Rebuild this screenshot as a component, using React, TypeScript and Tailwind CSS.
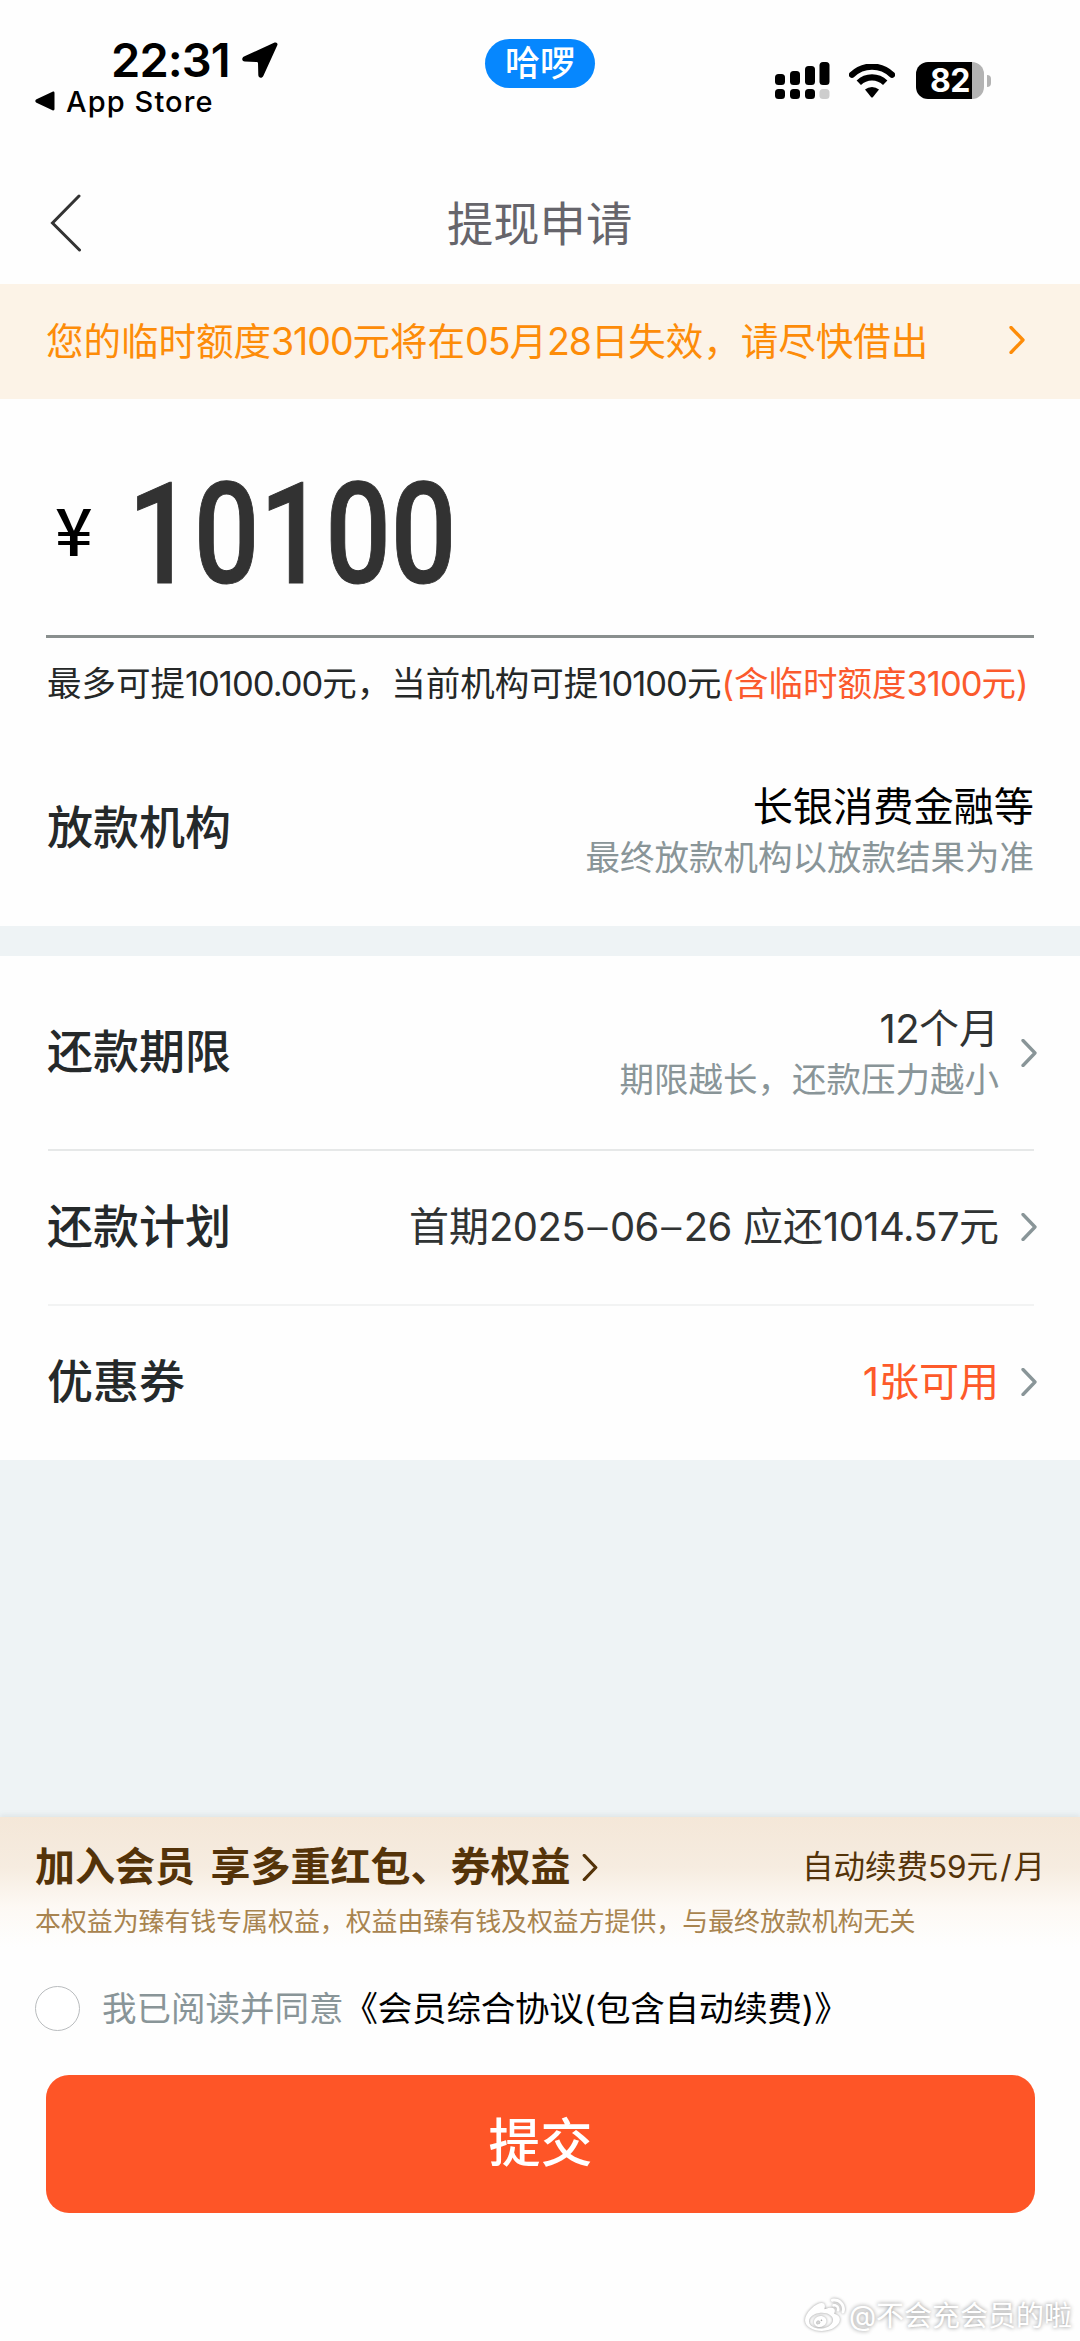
import type { ReactNode } from "react";
import { FaWeibo } from "react-icons/fa";

function Chevron({ className }: { className: string }) {
  return (
    <svg viewBox="0 0 16 28" fill="none" stroke="currentColor" className={className}>
      <path d="M2 1.5 14 14 2 26.5" strokeWidth="3.300" strokeLinecap="round" strokeLinejoin="round" />
    </svg>
  );
}

/* Digits set slightly tighter than the surrounding Chinese text. */
function Num({ children }: { children: ReactNode }) {
  return <span className="tracking-[-0.028em]">{children}</span>;
}

function LargeNum({ children }: { children: ReactNode }) {
  return <span className="tracking-[-0.015em]">{children}</span>;
}

function Dash() {
  return <span className="inline-block w-[25px] text-center font-light">–</span>;
}

function StatusBar() {
  return (
    <header className="flex h-[130px] shrink-0 text-black">
      <div className="w-[485px] pt-[36px]">
        <div className="flex h-[46px] items-center pl-[111px]">
          <span className="w-[131px] text-[47px] leading-none font-semibold tracking-[-0.9px]">22:31</span>
          <svg viewBox="0 0 36 36" className="mt-[2px] h-9 w-9">
            <path d="M32.6.6 2 14.6C-.6 16-.3 19.400 2.800 19.600L14.700 20a1.300 1.300 0 0 1 1.300 1.300l.3 11.600c.1 3.200 3.700 3.700 5 1L35.300 3.300C36.100 1.300 34.500-.2 32.600.6Z" fill="currentColor" />
          </svg>
        </div>
        <div className="mt-[1px] flex h-9 items-center pl-[35px]">
          <svg viewBox="0 0 20 20" className="h-5 w-5">
            <path d="M17.500.8 1.500 8.300c-1.600.8-1.600 2.600 0 3.400l16 7.500c1 .5 2 0 2-1.200V2c0-1.200-1-1.700-2-1.200Z" fill="currentColor" />
          </svg>
          <span className="ml-[11px] text-[29px] leading-none font-medium tracking-[1.1px]">App Store</span>
        </div>
      </div>
      <div className="mt-[39px] flex h-[49px] w-[110px] items-center justify-center rounded-full bg-[#0687fe] text-[35px] leading-none font-medium text-white">
        哈啰
      </div>
      <div className="ml-[180px] flex h-[37px] items-start pt-[62px]">
        <svg viewBox="0 0 55 38" className="h-[38px] w-[55px]" fill="currentColor">
          <rect x="0" y="12" width="10" height="11" rx="3.500" />
          <rect x="15" y="9" width="10" height="14" rx="3.500" />
          <rect x="30" y="4" width="10" height="19" rx="3.500" />
          <rect x="44.500" y="0" width="10" height="23" rx="3.500" />
          <rect x="0" y="27" width="10" height="10" rx="3.500" />
          <rect x="15" y="27" width="10" height="10" rx="3.500" />
          <rect x="30" y="27" width="10" height="10" rx="3.500" />
          <rect x="44.500" y="27" width="10" height="10" rx="3.500" fill="#cdcdcd" />
        </svg>
        <svg viewBox="0 0 46 34" className="mt-[2px] ml-[19px] h-[34px] w-[46px]">
          <g fill="none" stroke="currentColor" strokeWidth="6.200">
            <path d="M3 10.800a28.500 28.500 0 0 1 40 0" strokeLinecap="round" />
            <path d="M9.800 18.800a18.800 18.800 0 0 1 26.400 0" />
          </g>
          <path d="M16 25.600a10.500 10.500 0 0 1 14 0l-6 7.400a1.300 1.300 0 0 1-2 0Z" fill="currentColor" />
        </svg>
        <div className="ml-[21px] flex items-center">
          <div className="flex h-[37px] w-[68px] items-center justify-center overflow-hidden rounded-[12px] bg-[linear-gradient(90deg,#000_56px,#b3b3b3_56px)]">
            <span className="text-[32px] leading-none font-bold tracking-[-0.5px] text-white">82</span>
          </div>
          <div className="ml-[3px] h-3 w-1 rounded-r-full bg-[#b3b3b3]" />
        </div>
      </div>
    </header>
  );
}

function Row({ label, height, children }: { label: string; height: string; children: ReactNode }) {
  return (
    <div className={"mr-[46px] ml-[47px] flex shrink-0 items-center justify-between " + height}>
      <span className="mb-[3px] text-[46px] leading-none font-medium text-[#25292a]">{label}</span>
      {children}
    </div>
  );
}

export default function App() {
  return (
    <div
      lang="zh-CN"
      className="flex h-[2341px] w-[1080px] flex-col overflow-hidden bg-[#eef3f5] font-['Inter','Noto_Sans_CJK_SC',sans-serif] whitespace-nowrap"
    >
      <div className="flex h-[926px] shrink-0 flex-col bg-[#fefefe]">
        <StatusBar />
        <nav className="flex h-[154px] shrink-0 items-center pl-[50px]">
          <svg viewBox="0 0 31 58" className="mt-[32px] h-[58px] w-[31px]" fill="none" stroke="#333" strokeWidth="3">
            <path d="M29 2 2.500 29 29.500 56" strokeLinecap="round" />
          </svg>
          <h1 className="mt-[34px] ml-[366px] text-[46.300px] leading-none text-[#66656b]">提现申请</h1>
        </nav>

        <div className="flex h-[115px] shrink-0 items-center bg-[#fcf3e7] pl-[46px] text-[#fd8c09]">
          <span className="w-[963px] text-[37.500px] leading-none">
            您的临时额度<Num>3100</Num>元将在<Num>05</Num>月<Num>28</Num>日失效，请尽快借出
          </span>
          <Chevron className="mb-[4px] h-[28px] w-[16px]" />
        </div>

        <div className="mx-[46px] flex h-[239px] shrink-0 items-center border-b-[3px] border-[#898f8e]">
          <span className="mt-[20px] ml-[9px] w-[73px] font-['Noto_Sans_CJK_SC',sans-serif] text-[66px] leading-none font-medium text-black">¥</span>
          <span className="mt-[35px] origin-left scale-x-[0.82] font-['Roboto',sans-serif] text-[141px] leading-none font-medium text-[#323232] [-webkit-text-stroke:1px_#323232]">10100</span>
        </div>

        <p className="mr-[46px] ml-[47px] flex h-[92px] shrink-0 items-center text-[34.500px] leading-none text-[#252828]">
          最多可提<Num>10100.00</Num>元，当前机构可提<Num>10100</Num>元
          <span className="text-[#fb5a2d]">
            (含临时额度<Num>3100</Num>元)
          </span>
        </p>

        <Row label="放款机构" height="h-[196px]">
          <div className="mt-[7px] flex flex-col items-end">
            <span className="text-[40.200px] leading-[52px] text-black">长银消费金融等</span>
            <span className="text-[34.500px] leading-[50px] text-[#899598]">最终放款机构以放款结果为准</span>
          </div>
        </Row>
      </div>

      <div className="mt-[30px] flex h-[504px] shrink-0 flex-col bg-[#fefefe]">
        <Row label="还款期限" height="h-[193px]">
          <div className="flex items-center">
            <div className="mt-[2px] flex flex-col items-end">
              <span className="text-[40px] leading-[52px] text-[#303333]">
                <LargeNum>12</LargeNum>个月
              </span>
              <span className="text-[34.500px] leading-[50px] text-[#899598]">期限越长，还款压力越小</span>
            </div>
            <Chevron className="mr-[-3px] ml-[22px] h-[28px] w-[16px] text-[#899598]" />
          </div>
        </Row>
        <div className="mr-[46px] ml-[48px] h-[2px] shrink-0 bg-[#e6e8e8]" />
        <Row label="还款计划" height="h-[153px]">
          <div className="mb-[2px] flex items-center">
            <span className="text-[40px] leading-none text-[#303333]">
              首期<LargeNum>2025</LargeNum><Dash /><LargeNum>06</LargeNum><Dash /><LargeNum>26</LargeNum> 应还<LargeNum>1014.57</LargeNum>元
            </span>
            <Chevron className="mr-[-3px] ml-[22px] h-[28px] w-[16px] text-[#899598]" />
          </div>
        </Row>
        <div className="mr-[46px] ml-[48px] h-[2px] shrink-0 bg-[#f2f3f3]" />
        <Row label="优惠券" height="h-[152px]">
          <div className="flex items-center">
            <span className="text-[40px] leading-none text-[#fd5a2a]">1张可用</span>
            <Chevron className="mr-[-3px] ml-[22px] h-[28px] w-[16px] text-[#899598]" />
          </div>
        </Row>
      </div>

      <footer className="mt-[357px] flex h-[524px] shrink-0 flex-col bg-[linear-gradient(180deg,#f4e7d8_0px,#f6ece0_50px,#fdf9f4_90px,#fefefe_130px)] shadow-[0_-2px_5px_rgba(110,130,140,0.12)]">
        <div className="flex h-[100px] items-center px-[35px] text-[#543309]">
          <span className="text-[40px] leading-none font-bold [word-spacing:6px]">加入会员 享多重红包、券权益</span>
          <Chevron className="ml-[12px] h-[27px] w-[16px]" />
          <span className="ml-auto text-[31.500px] leading-none">
            自动续费59元<span className="mx-[2px]">/</span>月
          </span>
        </div>
        <p className="-mt-[8px] px-[35px] text-[25.900px] leading-none text-[#a8844f]">本权益为臻有钱专属权益，权益由臻有钱及权益方提供，与最终放款机构无关</p>
        <label className="mt-[32px] flex h-[84px] items-center pl-[35px] text-[34.500px] leading-none">
          <span className="h-[45px] w-[45px] rounded-full border-[1.500px] border-[#b9bcbe] bg-white" />
          <span className="ml-[22px] text-[#899598]">我已阅读并同意</span>
          <span className="tracking-[-0.2px] text-black">《会员综合协议(包含自动续费)》</span>
        </label>
        <button className="mr-[45px] ml-[46px] mt-[24px] h-[138px] shrink-0 rounded-[23px] bg-[#fe5527] text-[52px] leading-none font-medium text-white">提交</button>
        <div className="mt-[83px] mr-[8px] flex items-center justify-end text-white [text-shadow:0_0_4px_#888]">
          <FaWeibo className="mr-[4px] h-[40px] w-[40px] [filter:drop-shadow(0_0_1.500px_#999)]" />
          <span className="text-[28px] leading-none">@不会充会员的啦</span>
        </div>
      </footer>
    </div>
  );
}
